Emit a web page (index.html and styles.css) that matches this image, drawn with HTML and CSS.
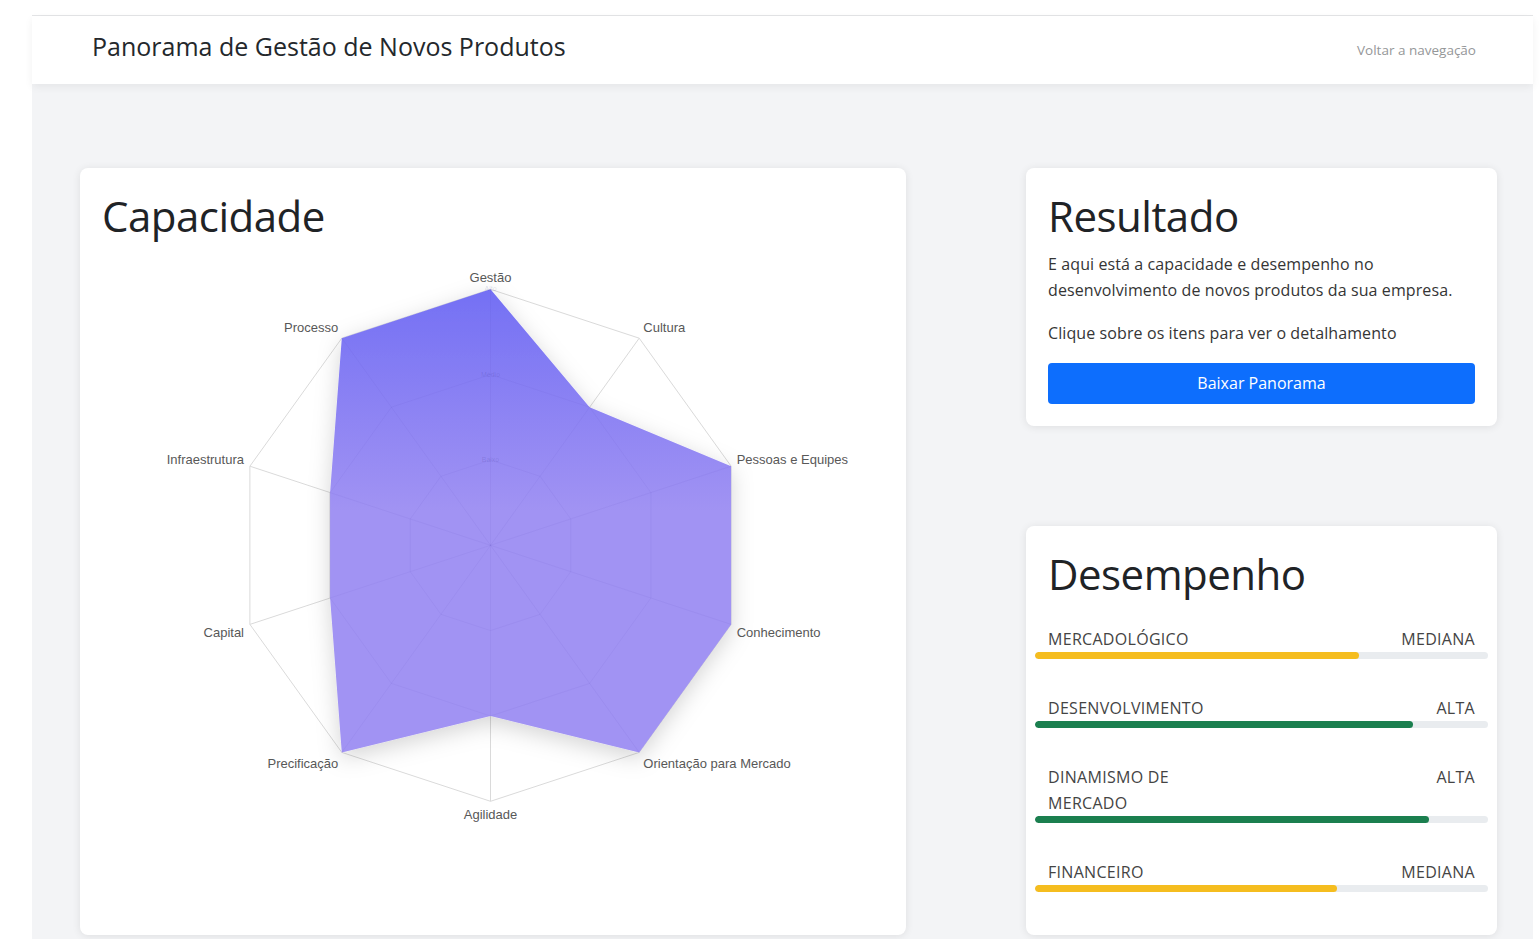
FILE: index.html
```html
<!DOCTYPE html>
<html lang="pt-BR">
<head>
<meta charset="utf-8">
<title>Panorama de Gestão de Novos Produtos</title>
<link rel="stylesheet" href="styles.css">
</head>
<body>
<div class="app">
  <nav class="navbar">
    <span class="brand">Panorama de Gestão de Novos Produtos</span>
    <a class="back-link" href="#">Voltar a navegação</a>
  </nav>

  <main class="content">
    <section class="card capacity">
      <div class="card-body">
        <h1 class="card-title">Capacidade</h1>
        <svg class="radar" viewBox="0 0 782 662" width="782" height="662" xmlns="http://www.w3.org/2000/svg">
          <defs>
            <linearGradient id="areaFill" gradientUnits="userSpaceOnUse" x1="0" y1="38" x2="0" y2="260">
              <stop offset="0" stop-color="#7470f4"/>
              <stop offset="1" stop-color="#a193f3"/>
            </linearGradient>
            <filter id="areaShadow" x="-20%" y="-20%" width="140%" height="140%">
              <feDropShadow dx="0" dy="6" stdDeviation="11" flood-color="#000" flood-opacity="0.17"/>
            </filter>
          </defs>

          <!-- grid rings and spokes -->
          <g class="grid">
            <polygon points="388.5,38.3 537.2,87.2 629.1,215.2 629.1,373.4 537.2,501.4 388.5,550.3 239.8,501.4 147.9,373.4 147.9,215.2 239.8,87.2"/>
            <polygon points="388.5,123.6 487.6,156.2 548.9,241.6 548.9,347.0 487.6,432.4 388.5,465.0 289.4,432.4 228.1,347.0 228.1,241.6 289.4,156.2"/>
            <polygon points="388.5,209.0 438.1,225.3 468.7,267.9 468.7,320.7 438.1,363.3 388.5,379.6 338.9,363.3 308.3,320.7 308.3,267.9 338.9,225.3"/>
            <line x1="388.5" y1="294.3" x2="388.5" y2="38.3"/>
            <line x1="388.5" y1="294.3" x2="537.2" y2="87.2"/>
            <line x1="388.5" y1="294.3" x2="629.1" y2="215.2"/>
            <line x1="388.5" y1="294.3" x2="629.1" y2="373.4"/>
            <line x1="388.5" y1="294.3" x2="537.2" y2="501.4"/>
            <line x1="388.5" y1="294.3" x2="388.5" y2="550.3"/>
            <line x1="388.5" y1="294.3" x2="239.8" y2="501.4"/>
            <line x1="388.5" y1="294.3" x2="147.9" y2="373.4"/>
            <line x1="388.5" y1="294.3" x2="147.9" y2="215.2"/>
            <line x1="388.5" y1="294.3" x2="239.8" y2="87.2"/>
          </g>

          <!-- dataset area -->
          <polygon class="area" filter="url(#areaShadow)" points="388.5,38.3 487.6,156.2 629.1,215.2 629.1,373.4 537.2,501.4 388.5,465.0 239.8,501.4 228.1,347.0 228.1,241.6 239.8,87.2"/>

          <!-- grid seen through the area -->
          <g class="grid-inner">
            <polygon points="388.5,123.6 487.6,156.2 548.9,241.6 548.9,347.0 487.6,432.4 388.5,465.0 289.4,432.4 228.1,347.0 228.1,241.6 289.4,156.2"/>
            <polygon points="388.5,209.0 438.1,225.3 468.7,267.9 468.7,320.7 438.1,363.3 388.5,379.6 338.9,363.3 308.3,320.7 308.3,267.9 338.9,225.3"/>
            <line x1="388.5" y1="294.3" x2="388.5" y2="38.3"/>
            <line x1="388.5" y1="294.3" x2="487.6" y2="156.2"/>
            <line x1="388.5" y1="294.3" x2="629.1" y2="215.2"/>
            <line x1="388.5" y1="294.3" x2="629.1" y2="373.4"/>
            <line x1="388.5" y1="294.3" x2="537.2" y2="501.4"/>
            <line x1="388.5" y1="294.3" x2="388.5" y2="465.0"/>
            <line x1="388.5" y1="294.3" x2="239.8" y2="501.4"/>
            <line x1="388.5" y1="294.3" x2="228.1" y2="347.0"/>
            <line x1="388.5" y1="294.3" x2="228.1" y2="241.6"/>
            <line x1="388.5" y1="294.3" x2="239.8" y2="87.2"/>
          </g>

          <!-- scale ticks -->
          <g class="ticks">
            <text x="388.5" y="40">Alto</text>
            <text x="388.5" y="126">Médio</text>
            <text x="388.5" y="211">Baixo</text>
          </g>

          <!-- axis labels -->
          <g class="labels">
            <text x="388.5" y="26.5" text-anchor="middle">Gestão</text>
            <text x="541.3" y="76.3" text-anchor="start">Cultura</text>
            <text x="634.7" y="208" text-anchor="start">Pessoas e Equipes</text>
            <text x="634.7" y="381.3" text-anchor="start">Conhecimento</text>
            <text x="541.3" y="512.3" text-anchor="start">Orientação para Mercado</text>
            <text x="388.5" y="563.3" text-anchor="middle">Agilidade</text>
            <text x="236.3" y="512.3" text-anchor="end">Precificação</text>
            <text x="142" y="381.3" text-anchor="end">Capital</text>
            <text x="142" y="208" text-anchor="end">Infraestrutura</text>
            <text x="236.3" y="76.3" text-anchor="end">Processo</text>
          </g>
        </svg>
      </div>
    </section>

    <div class="side">
      <section class="card result">
        <div class="card-body">
          <h1 class="card-title">Resultado</h1>
          <p class="lead-text">E aqui está a capacidade e desempenho no desenvolvimento de novos produtos da sua empresa.</p>
          <p class="hint">Clique sobre os itens para ver o detalhamento</p>
          <button class="btn-primary" type="button">Baixar Panorama</button>
        </div>
      </section>

      <section class="card performance">
        <div class="card-body">
          <h1 class="card-title">Desempenho</h1>
          <ul class="metrics">
            <li class="metric">
              <div class="metric-head"><span class="metric-name">MERCADOLÓGICO</span><span class="metric-level">MEDIANA</span></div>
              <div class="track"><div class="fill fill-mid" style="width: 71.5%"></div></div>
            </li>
            <li class="metric">
              <div class="metric-head"><span class="metric-name">DESENVOLVIMENTO</span><span class="metric-level">ALTA</span></div>
              <div class="track"><div class="fill fill-high" style="width: 83.4%"></div></div>
            </li>
            <li class="metric">
              <div class="metric-head"><span class="metric-name">DINAMISMO DE MERCADO</span><span class="metric-level">ALTA</span></div>
              <div class="track"><div class="fill fill-high" style="width: 87%"></div></div>
            </li>
            <li class="metric">
              <div class="metric-head"><span class="metric-name">FINANCEIRO</span><span class="metric-level">MEDIANA</span></div>
              <div class="track"><div class="fill fill-mid" style="width: 66.7%"></div></div>
            </li>
          </ul>
        </div>
      </section>
    </div>
  </main>
</div>
</body>
</html>
```

FILE: styles.css
```css
* {
  box-sizing: border-box;
}

html,
body {
  margin: 0;
  background: #ffffff;
  font-family: "Open Sans", "Noto Sans", sans-serif;
  color: #212529;
}

.app {
  margin: 15px 6px 0 32px;
  border-top: 1px solid #e4e5e7;
  background: #f3f4f6;
  min-height: 924px;
}

/* top bar */
.navbar {
  height: 68px;
  display: flex;
  align-items: center;
  justify-content: space-between;
  padding: 0 57px 0 60px;
  background: #ffffff;
  box-shadow: 0 3px 8px rgba(0, 0, 0, 0.06);
  position: relative;
}

.brand {
  font-size: 25px;
  line-height: 1.5;
  color: #24282c;
  margin-bottom: 7px;
}

.back-link {
  font-size: 13.5px;
  color: #959799;
  text-decoration: none;
}

/* page grid */
.content {
  display: grid;
  grid-template-columns: 826px 471px;
  column-gap: 120px;
  padding: 84px 36px 0 48px;
  align-items: stretch;
}

.card {
  background: #ffffff;
  border-radius: 8px;
  box-shadow: 0 1px 8px rgba(0, 0, 0, 0.09);
}

.card-body {
  padding: 22px;
}

.card-title {
  margin: 0 0 9px;
  font-size: 42px;
  font-weight: 500;
  line-height: 51.6px;
  color: #1f2326;
  letter-spacing: -0.5px;
}

/* radar chart */
.radar {
  display: block;
}

.grid polygon,
.grid line {
  fill: none;
  stroke: #dadada;
  stroke-width: 1;
}

.grid-inner polygon,
.grid-inner line {
  fill: none;
  stroke: rgba(60, 40, 160, 0.05);
  stroke-width: 1;
}

.area {
  fill: url(#areaFill);
}

.ticks text {
  font-family: "Liberation Sans", Arial, sans-serif;
  font-size: 7px;
  fill: rgba(40, 30, 120, 0.16);
  text-anchor: middle;
}

.labels text {
  font-family: "Liberation Sans", Arial, sans-serif;
  font-size: 13px;
  fill: #585858;
  dominant-baseline: central;
}

/* right column */
.side {
  display: flex;
  flex-direction: column;
  gap: 100px;
}

.performance {
  flex: 1;
}

.lead-text,
.hint {
  margin: 0 0 17px;
  font-size: 16px;
  line-height: 26px;
  color: #353535;
  letter-spacing: 0.1px;
}

.btn-primary {
  display: block;
  width: 100%;
  height: 41px;
  border: 0;
  border-radius: 4px;
  background: #0d6efd;
  color: #ffffff;
  font-family: "Open Sans", "Noto Sans", sans-serif;
  font-size: 16px;
}

/* performance bars */
.metrics {
  list-style: none;
  margin: 0 -13px;
  padding: 18px 0 0;
}

.metric + .metric {
  margin-top: 36px;
}

.metric-head {
  display: flex;
  justify-content: space-between;
  align-items: flex-start;
  padding: 0 13px;
  font-size: 16px;
  line-height: 26px;
  color: #444444;
  letter-spacing: 0.3px;
}

.metric-name {
  max-width: 170px;
}

.track {
  height: 7px;
  border-radius: 4px;
  background: #e9ecef;
  overflow: hidden;
}

.fill {
  height: 100%;
  border-radius: 4px;
}

.fill-mid {
  background: #f5bd1f;
}

.fill-high {
  background: #1b7f4f;
}
```
